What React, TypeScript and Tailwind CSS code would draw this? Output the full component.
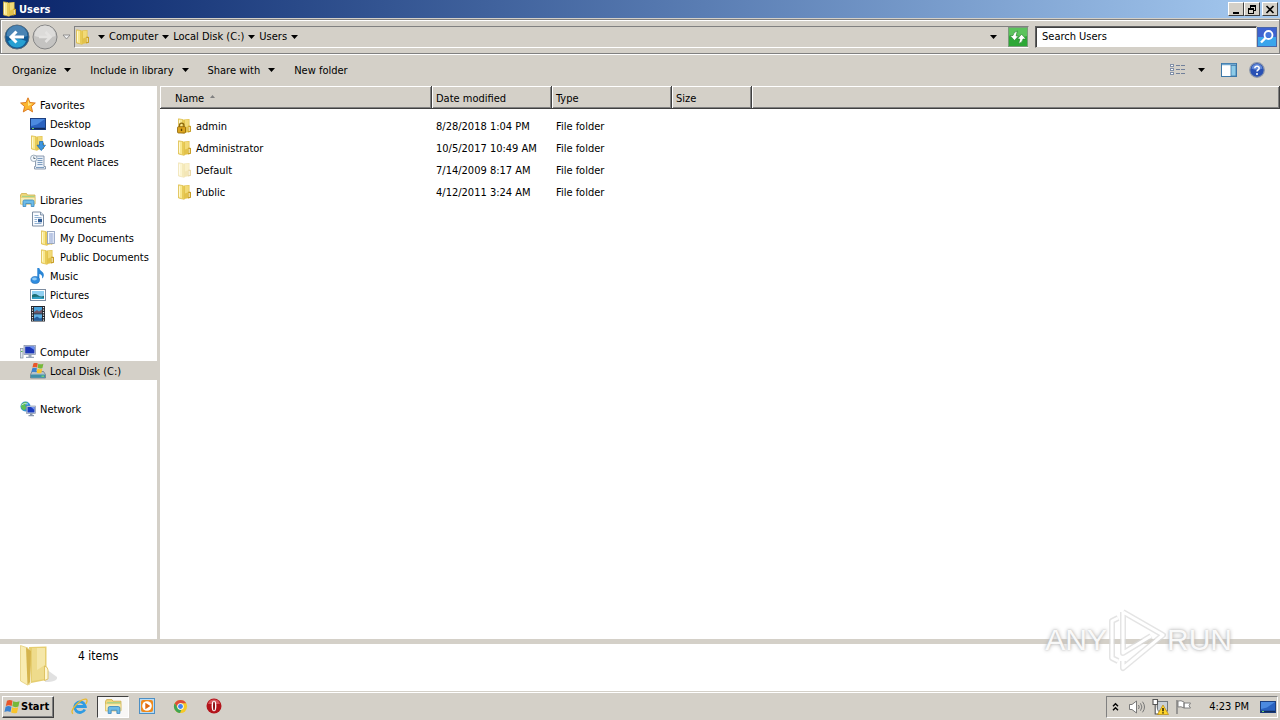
import React, { useState } from 'react';

interface FileRow {
    name: string;
    modified: string;
    type: string;
    icon: React.ReactNode;
}

interface TreeRow {
    label: string;
    level: number;
    icon: React.ReactNode;
    gap?: boolean;
}

const indents = ['pl-5', 'pl-[30px]', 'pl-10'];

const Arrow: React.FC = () => (
    <svg width="7" height="4" viewBox="0 0 7 4" className="shrink-0" aria-hidden="true">
        <path d="M0 0h7L3.500 4z" fill="#000" />
    </svg>
);

const Folder: React.FC<{ faded?: boolean; children?: React.ReactNode }> = ({ faded, children }) => (
    <svg width="16" height="16" viewBox="0 0 16 16" className="shrink-0" aria-hidden="true">
        <g opacity={faded ? 0.4 : 1}>
            <path d="M7 1.500l5.500-.5v13L7 15z" fill="#e3c24a" />
            <path d="M8 2l3.800-.3V8L8 9.500z" fill="#f2da78" />
            <path d="M1.500 .8l4.700.9 1 13.600-5.700-1.300z" fill="#f9e88f" stroke="#d9b43c" strokeWidth=".7" />
            <path d="M5 1.600l2.300.4v13.300L5 14.800z" fill="#e8cb58" />
            <path d="M2.500 2.200v10.500" stroke="#fff8d0" strokeWidth="1" />
            <path d="M11.500 7.500l2.500.5v5.800l-3 .8z" fill="#c99f27" />
            <path d="M12.200 9v4" stroke="#fff6cf" strokeWidth="1" />
        </g>
        {children}
    </svg>
);

const LockedFolder: React.FC = () => (
    <Folder>
        <path d="M2.500 9V7.300a2.200 2.200 0 0 1 4.400 0V9" fill="none" stroke="#8d6a10" strokeWidth="1.300" />
        <rect x=".5" y="8.700" width="8" height="6.300" rx="1" fill="#dca51f" stroke="#8a6207" strokeWidth=".8" />
        <path d="M4.500 10.700v2.300" stroke="#5d4207" strokeWidth="1.400" />
    </Folder>
);

const DownloadsIcon: React.FC = () => (
    <Folder>
        <path d="M9.500 6.500h3.500v3.700h2.500L11.300 15.600 7 10.200h2.500z" fill="#3d95e0" stroke="#1768b0" strokeWidth=".7" />
    </Folder>
);

const MyDocumentsIcon: React.FC = () => (
    <Folder>
        <rect x="7.500" y="1.500" width="7" height="12" fill="#f6f9ff" stroke="#8a9cc0" strokeWidth=".8" />
        <path d="M9 4h4.500M9 6h4.500M9 8h4.500M9 10h4.500M9 12h4.500" stroke="#7f95c9" strokeWidth=".9" />
        <path d="M11.200 3v9" stroke="#aebce0" strokeWidth=".6" />
    </Folder>
);

const StarIcon: React.FC = () => (
    <svg width="16" height="16" viewBox="0 0 16 16" aria-hidden="true">
        <path d="M8 .8l2 4.700 5.300.5-4 3.500 1.300 5.400L8 12.100l-4.700 2.800 1.300-5.400-4-3.500L6 5.500z" fill="#fbb62e" stroke="#d9731a" strokeWidth=".9" />
        <path d="M8 3l1.300 3.400 3.400.4L8 9z" fill="#ffe68a" />
    </svg>
);

const DesktopIcon: React.FC = () => (
    <svg width="16" height="16" viewBox="0 0 16 16" aria-hidden="true">
        <rect x=".5" y="2.500" width="15" height="11" fill="#2a62c0" stroke="#1c3f80" />
        <path d="M1 3h14L7 8.500 1 10z" fill="#4c8ae0" />
        <path d="M1 12.500h14" stroke="#102a58" strokeWidth="1.500" />
        <path d="M2 12.500h2" stroke="#6fd06a" strokeWidth="1" />
    </svg>
);

const RecentIcon: React.FC = () => (
    <svg width="16" height="16" viewBox="0 0 16 16" aria-hidden="true">
        <path d="M5.500 2h8.500v10.500h1.500V15H4.500v-2.500h1z" fill="#e8eff7" stroke="#73879e" strokeWidth=".8" />
        <path d="M7.500 4.500h5M7.500 6.500h5M7.500 8.500h5M7.500 10.500h5M6 13.500h8" stroke="#6f92b8" strokeWidth=".9" />
        <circle cx="3.800" cy="4.300" r="3.200" fill="#f5fafe" stroke="#8899aa" strokeWidth=".8" />
        <path d="M3.800 2.500v2h1.700" fill="none" stroke="#456" strokeWidth=".8" />
    </svg>
);

const LibrariesIcon: React.FC<{ size?: number }> = ({ size = 16 }) => (
    <svg width={size} height={size} viewBox="0 0 16 16" aria-hidden="true">
        <path d="M.5 3l1-1.500h5L7.500 3H15v9H.5z" fill="#f0d77b" stroke="#cfae4a" strokeWidth=".8" />
        <path d="M2 3.800h12.500v1.500H2z" fill="#a6d28a" />
        <path d="M.6 5.500h14.300V12H.6z" fill="#faeeb4" stroke="#dfc46a" strokeWidth=".5" />
        <path d="M3 14.500V9.500Q3 8 4.500 8h8Q14 8 14 9.500v5h-2.800v-3H5.800v3z" fill="#6cbbe8" stroke="#3b86bd" strokeWidth=".8" />
    </svg>
);

const DocumentIcon: React.FC = () => (
    <svg width="16" height="16" viewBox="0 0 16 16" aria-hidden="true">
        <path d="M2.500 1h8l3 3v11h-11z" fill="#fafcff" stroke="#6f8299" strokeWidth=".9" />
        <path d="M10.500 1v3h3" fill="#d5e1ee" stroke="#6f8299" strokeWidth=".8" />
        <path d="M4.500 4.500h4M4.500 6.500h7M4.500 8.500h2.500M4.500 10.500h2.500M4.500 12.500h7" stroke="#85a8cd" strokeWidth=".9" />
        <rect x="8" y="7.800" width="4" height="3.500" fill="#2d5a94" />
    </svg>
);

const MusicIcon: React.FC = () => (
    <svg width="16" height="16" viewBox="0 0 16 16" aria-hidden="true">
        <path d="M7.300 0h2c.3 3 5 3.500 4.500 7.500-.2 1.600-.9 2.500-1.800 3 .7-2.700-.5-3.800-2.700-4.400V12h-2z" fill="#2b86d6" />
        <ellipse cx="5.200" cy="12" rx="4.300" ry="3.500" fill="#2f8de0" stroke="#1968b5" strokeWidth=".6" />
        <ellipse cx="4.500" cy="11" rx="2.400" ry="1.400" fill="#8fcaf5" />
    </svg>
);

const PicturesIcon: React.FC = () => (
    <svg width="16" height="16" viewBox="0 0 16 16" aria-hidden="true">
        <rect x=".5" y="2.500" width="15" height="11" fill="#fff" stroke="#7c8ca0" />
        <rect x="2" y="4" width="12" height="8" fill="#8fd0f2" />
        <path d="M2 8q3-2 6 .3t6 .5V12H2z" fill="#1d6f74" />
        <path d="M2 10.500q5-1.500 12 .5v1H2z" fill="#2f9fc4" />
    </svg>
);

const VideosIcon: React.FC = () => (
    <svg width="16" height="16" viewBox="0 0 16 16" aria-hidden="true">
        <rect x="1" y="0" width="14" height="15.500" fill="#22252c" />
        <rect x="4" y="1" width="8" height="6.300" fill="#4aa3dc" />
        <rect x="4" y="8.300" width="8" height="6.300" fill="#5fb0e4" />
        <path d="M4 6l3-2 2 1.500 3-2v3.800H4z" fill="#6f5668" />
        <path d="M4 12.500l3-2 3 2 2-1v3.100H4z" fill="#265d9c" />
        <path d="M2.500 1v14M13.500 1v14" stroke="#e8ecf0" strokeWidth="1.200" strokeDasharray="1.300 1.200" />
    </svg>
);

const ComputerIcon: React.FC = () => (
    <svg width="16" height="16" viewBox="0 0 16 16" aria-hidden="true">
        <rect x=".5" y="4.500" width="2.500" height="9.500" fill="#dfe5ec" stroke="#8090a0" strokeWidth=".7" />
        <path d="M1 7.500h1.500" stroke="#56b450" />
        <rect x="4" y="1.500" width="11.500" height="9" fill="#c9d2e0" stroke="#7f8ca5" strokeWidth=".7" />
        <rect x="5.200" y="2.600" width="9.200" height="6.800" fill="#1c37b8" />
        <path d="M9 2.600h5.400v3.500z" fill="#6c8ff0" />
        <path d="M8.500 10.500h3v2.200h2.500v1.300H6v-1.300h2.500z" fill="#98a6ba" />
    </svg>
);

const WindowsFlag: React.FC = () => (
    <>
        <path d="M2.800 1.700Q5.300 .3 8 1.700L7.200 6.500Q4.500 5.200 1.700 6.500z" fill="#e8562a" />
        <path d="M8.600 2Q11.500 3.400 14.600 2L13.500 7Q10.500 8.300 7.800 6.900z" fill="#76b83a" />
        <path d="M1.500 7.300Q4.200 6 7 7.300L6.100 12.100Q3.200 10.800.4 12.100z" fill="#3b82d0" />
        <path d="M7.600 7.700Q10.400 9.100 13.300 7.800L12.200 12.800Q9.400 14 6.700 12.600z" fill="#f8c42c" />
    </>
);

const DiskIcon: React.FC = () => (
    <svg width="16" height="16" viewBox="0 0 16 16" aria-hidden="true">
        <path d="M2 8.500h11.500l2 3v3.500H.5v-3.500z" fill="#b4c2cd" stroke="#62707d" strokeWidth=".7" />
        <rect x=".8" y="11.500" width="14.400" height="3.300" fill="#3f8fa8" />
        <path d="M11.500 13.200h2.500" stroke="#7be06a" strokeWidth="1.200" />
        <g transform="translate(1 -1) scale(.85)">
            <WindowsFlag />
        </g>
    </svg>
);

const NetworkIcon: React.FC = () => (
    <svg width="16" height="16" viewBox="0 0 16 16" aria-hidden="true">
        <circle cx="5.500" cy="5.500" r="5" fill="#2f8fd8" />
        <path d="M2 2.500Q5 0 7.500 1.500L5 4.500 6.500 7 4 9.500Q.5 7.500 1 4.500z" fill="#5fbf54" />
        <path d="M1.500 4Q4 1.500 8 3" fill="none" stroke="#d5effc" strokeWidth=".8" />
        <rect x="6.500" y="5" width="9" height="7.500" fill="#cdd6e4" stroke="#7a88a0" strokeWidth=".6" />
        <rect x="7.500" y="6" width="7" height="5.500" fill="#1b3cbf" />
        <path d="M11 6h3.500v3z" fill="#7797ee" />
        <path d="M10 12.500h2.500v1.500H14v1.200H8.500V14H10z" fill="#8797ad" />
    </svg>
);

const files: FileRow[] = [
    { name: 'admin', modified: '8/28/2018 1:04 PM', type: 'File folder', icon: <LockedFolder /> },
    { name: 'Administrator', modified: '10/5/2017 10:49 AM', type: 'File folder', icon: <Folder /> },
    { name: 'Default', modified: '7/14/2009 8:17 AM', type: 'File folder', icon: <Folder faded /> },
    { name: 'Public', modified: '4/12/2011 3:24 AM', type: 'File folder', icon: <Folder /> },
];

const tree: TreeRow[] = [
    { label: 'Favorites', level: 0, icon: <StarIcon /> },
    { label: 'Desktop', level: 1, icon: <DesktopIcon /> },
    { label: 'Downloads', level: 1, icon: <DownloadsIcon /> },
    { label: 'Recent Places', level: 1, icon: <RecentIcon /> },
    { label: 'Libraries', level: 0, icon: <LibrariesIcon />, gap: true },
    { label: 'Documents', level: 1, icon: <DocumentIcon /> },
    { label: 'My Documents', level: 2, icon: <MyDocumentsIcon /> },
    { label: 'Public Documents', level: 2, icon: <Folder /> },
    { label: 'Music', level: 1, icon: <MusicIcon /> },
    { label: 'Pictures', level: 1, icon: <PicturesIcon /> },
    { label: 'Videos', level: 1, icon: <VideosIcon /> },
    { label: 'Computer', level: 0, icon: <ComputerIcon />, gap: true },
    { label: 'Local Disk (C:)', level: 1, icon: <DiskIcon /> },
    { label: 'Network', level: 0, icon: <NetworkIcon />, gap: true },
];

const TitleBar: React.FC = () => {
    const button = 'w-4 h-3.5 bg-[#d4d0c8] border border-t-white border-l-white border-r-[#404040] border-b-[#404040] flex items-center justify-center';
    return (
        <header className="h-[18px] flex items-center justify-between pl-0.5 pr-0.5 bg-linear-to-r from-[#0a246a] to-[#a6caf0]">
            <div className="flex items-center gap-px">
                <Folder />
                <h1 className="font-bold text-[11px] text-white">Users</h1>
            </div>
            <div className="flex">
                <button aria-label="Minimize" className={button}>
                    <svg width="10" height="9" viewBox="0 0 10 9"><path d="M2 7h6v2H2z" /></svg>
                </button>
                <button aria-label="Restore" className={button}>
                    <svg width="10" height="9" viewBox="0 0 10 9" fill="none" stroke="#000" shapeRendering="crispEdges">
                        <path d="M3.500 3V.5h5v5H7M3 1.500h6M1.500 3.500h5v5h-5zM1 4.500h6" />
                    </svg>
                </button>
                <button aria-label="Close" className={`${button} ml-0.5`}>
                    <svg width="10" height="9" viewBox="0 0 10 9"><path d="M1.500 1l7 7M8.500 1l-7 7" stroke="#000" strokeWidth="1.600" /></svg>
                </button>
            </div>
        </header>
    );
};

const NavBar: React.FC = () => {
    const [query, setQuery] = useState('Search Users');
    return (
        <div className="h-[35px] flex items-center pl-[3px] pr-0.5 mt-px border border-[#808080] shadow-[0_1px_0_#fff,inset_1px_1px_0_#fff]">
            <button aria-label="Back">
                <svg width="26" height="26" viewBox="0 0 26 26">
                    <circle cx="13" cy="13" r="12" fill="#125a94" stroke="#5a6c7c" />
                    <path d="M2.500 12a10.500 10.500 0 0 1 21 0q-10 4-21 0z" fill="#4a84b4" />
                    <path d="M4 17q9-4 18 0-2.500 6.500-9 6.500T4 17z" fill="#27a0d2" />
                    <path d="M20 13H8M12.500 7.500L7 13l5.500 5.500" fill="none" stroke="#fff" strokeWidth="3" />
                </svg>
            </button>
            <button aria-label="Forward" className="ml-0.5">
                <svg width="26" height="26" viewBox="0 0 26 26">
                    <circle cx="13" cy="13" r="12" fill="#c4c3c1" stroke="#858585" />
                    <path d="M2.500 12a10.500 10.500 0 0 1 21 0q-10 4-21 0z" fill="#dcdbd9" />
                    <path d="M7 13h11M13.500 8l5 5-5 5" fill="none" stroke="#e4e3e1" strokeWidth="2.500" />
                </svg>
            </button>
            <button aria-label="Recent pages" className="w-4 flex justify-center">
                <svg width="9" height="6" viewBox="0 0 9 6"><path d="M1 1h7L4.500 5z" fill="#eee" stroke="#808080" strokeWidth=".8" /></svg>
            </button>
            <nav className="flex-1 h-[22px] flex items-center border border-t-[#808080] border-l-[#808080] border-r-[#d4d0c8] border-b-white">
                <Folder />
                <button aria-label="Show roots" className="ml-[7px]"><Arrow /></button>
                <a href="#computer" className="ml-1">Computer</a>
                <button aria-label="Computer folders" className="w-[15px] flex justify-center"><Arrow /></button>
                <a href="#disk">Local Disk (C:)</a>
                <button aria-label="Local Disk folders" className="w-[15px] flex justify-center"><Arrow /></button>
                <a href="#users">Users</a>
                <button aria-label="Users folders" className="w-[15px] flex justify-center"><Arrow /></button>
                <button aria-label="Previous locations" className="ml-auto mr-[11px]"><Arrow /></button>
                <button aria-label="Refresh" className="w-5 h-5 bg-[#2da836] border border-[#7c9a7c] flex items-center justify-center">
                    <svg width="18" height="18" viewBox="0 0 18 18">
                        <path d="M0 0h18v8Q9 11 0 8z" fill="#5cc35c" />
                        <path d="M8.500 3Q7.500 5 7.200 8h2.300l-4 4.500L1 7.500h3Q4.500 3.500 8.500 3zM9.500 15.500Q10.500 13.500 10.800 11H8.500l4-4.800L17 11h-3Q13.500 15 9.500 15.500z" fill="#fff" stroke="#1c7a24" strokeWidth=".6" />
                    </svg>
                </button>
            </nav>
            <div className="flex items-center ml-1.5">
                <input
                    type="text"
                    aria-label="Search Users"
                    value={query}
                    onChange={(e) => setQuery(e.target.value)}
                    className="w-[222px] h-[22px] pl-1.5 bg-white outline-none border border-t-[#606060] border-l-[#606060] border-r-[#d4d0c8] border-b-[#d4d0c8] shadow-[inset_1px_1px_0_#404040]"
                />
                <button aria-label="Search" className="w-5 h-5 bg-[#3a8be0] border border-[#4a66a8] flex items-center justify-center">
                    <svg width="18" height="18" viewBox="0 0 18 18">
                        <path d="M0 0h18v9H0z" fill="#3d62cf" />
                        <path d="M0 9h18v9H0z" fill="#3aa5ec" />
                        <circle cx="10.500" cy="7" r="4" fill="#4476dc" stroke="#fff" strokeWidth="1.800" />
                        <path d="M7.500 10l-4.500 4.500" stroke="#fff" strokeWidth="2.400" />
                    </svg>
                </button>
            </div>
        </div>
    );
};

const Toolbar: React.FC = () => (
    <div className="h-8 flex items-center pl-3 pr-[15px]">
        <button className="flex items-center gap-2 mr-[19px]">Organize <Arrow /></button>
        <button className="flex items-center gap-2 mr-[19px]">Include in library <Arrow /></button>
        <button className="flex items-center gap-2 mr-[19px]">Share with <Arrow /></button>
        <button>New folder</button>
        <button aria-label="Change view" className="ml-auto">
            <svg width="16" height="14" viewBox="0 0 16 14" shapeRendering="crispEdges">
                <path d="M.5 1.500h3v2h-3zM.5 5.500h3v2h-3zM.5 9.500h3v2h-3z" fill="#fff" stroke="#8290a8" />
                <path d="M6 2.500h4M11 2.500h4M6 6.500h4M11 6.500h4M6 10.500h4M11 10.500h4" stroke="#71809a" />
            </svg>
        </button>
        <button aria-label="More view options" className="ml-3"><Arrow /></button>
        <button aria-label="Preview pane" className="ml-4">
            <svg width="16" height="14" viewBox="0 0 16 14">
                <rect x=".5" y=".5" width="15" height="13" fill="#fff" stroke="#3c77a8" />
                <path d="M1 1.500h14" stroke="#6fa6cf" strokeWidth="1.500" />
                <rect x="10" y="2.500" width="5" height="10.500" fill="#8dcbe8" stroke="#3c77a8" strokeWidth=".8" />
            </svg>
        </button>
        <button aria-label="Help" className="ml-3">
            <svg width="16" height="16" viewBox="0 0 16 16">
                <circle cx="8" cy="8" r="7.300" fill="#2850b4" stroke="#8c97ab" strokeWidth="1.200" />
                <path d="M2.500 6.500a5.600 5.600 0 0 1 11 0Q8 9 2.500 6.500z" fill="#6389d8" />
                <path d="M5.800 6.300Q5.900 4.200 8 4.200t2.200 1.900Q10.200 7.300 9 8q-1 .6-1 1.600" fill="none" stroke="#fff" strokeWidth="1.500" />
                <circle cx="8" cy="11.900" r="1" fill="#fff" />
            </svg>
        </button>
    </div>
);

const Sidebar: React.FC = () => {
    const [selected, setSelected] = useState('Local Disk (C:)');
    return (
        <aside className="w-40 shrink-0 bg-white border-r-3 border-[#d4d0c8] pt-[9px]">
            <ul>
                {tree.map((t) => (
                    <li key={t.label} className={t.gap ? 'mt-[19px]' : ''}>
                        <button
                            onClick={() => setSelected(t.label)}
                            className={`w-full h-[19px] flex items-center gap-1 text-left whitespace-nowrap ${indents[t.level]} ${selected === t.label ? 'bg-[#d4d0c8]' : ''}`}
                        >
                            {t.icon}
                            <span className="pt-px">{t.label}</span>
                        </button>
                    </li>
                ))}
            </ul>
        </aside>
    );
};

const FileList: React.FC = () => {
    const head = 'h-[23px] p-0 pt-px pl-1 text-left font-normal bg-[#d4d0c8] shadow-[inset_-1px_-1px_0_#404040,inset_1px_1px_0_#fff,inset_-2px_-2px_0_#808080]';
    return (
        <main className="flex-1 bg-white">
            <table className="w-full table-fixed border-separate border-spacing-0">
                <thead>
                    <tr>
                        <th className={`${head} w-[272px]`}>
                            <span className="flex items-center gap-1.5 pl-[11px]">
                                Name
                                <svg width="5" height="3" viewBox="0 0 5 3" className="mb-1"><path d="M0 3h5L2.500 0z" fill="#808080" /></svg>
                            </span>
                        </th>
                        <th className={`${head} w-30`}>Date modified</th>
                        <th className={`${head} w-30`}>Type</th>
                        <th className={`${head} w-20`}>Size</th>
                        <th className={head} aria-label="Empty"></th>
                    </tr>
                </thead>
                <tbody className="before:block before:h-1.5">
                    {files.map((f) => (
                        <tr key={f.name} className="h-[22px]">
                            <td className="p-0 pl-[17px]">
                                <span className="flex items-center gap-[3px]">
                                    {f.icon}
                                    <span className="pt-px">{f.name}</span>
                                </span>
                            </td>
                            <td className="p-0 pt-px pl-1 whitespace-nowrap">{f.modified}</td>
                            <td className="p-0 pt-px pl-1">{f.type}</td>
                            <td></td>
                            <td></td>
                        </tr>
                    ))}
                </tbody>
            </table>
        </main>
    );
};

const DetailsPane: React.FC = () => (
    <section className="h-[52px] shrink-0 flex items-start bg-white border-t-5 border-[#d4d0c8] pl-[19px]">
        <svg width="40" height="44" viewBox="0 0 40 44" aria-hidden="true">
            <path d="M27 25l11 8q1 5-12 5z" fill="#d4d4d4" opacity=".7" />
            <path d="M10 3l17.500-.5V36L12 39z" fill="#e6ce70" />
            <path d="M13 4h13v31l-13 2z" fill="#eedb8c" />
            <path d="M18 4h8v17l-8 5z" fill="#f5e7a9" />
            <path d="M1.500 1.500L9 4l2 36-2.500 1-7-4z" fill="#f9ecb2" stroke="#e5cf7c" strokeWidth=".8" />
            <path d="M7 3.500l5 3.500-1 31-2.500 3z" fill="#d5b44e" />
            <path d="M25.500 22q3.500 1 3.500 4v9l-3.500 1.500z" fill="#fff7d3" stroke="#d8b950" strokeWidth=".8" />
        </svg>
        <p className="ml-[19px] mt-1 text-[12px]">4 items</p>
    </section>
);

const Taskbar: React.FC = () => (
    <footer className="h-[29px] shrink-0 flex items-center pl-0.5 pr-0.5 border-t border-[#d4d0c8] shadow-[inset_0_1px_0_#fff]">
        <button className="h-[22px] w-[52px] mt-px flex items-center gap-px pl-px font-bold text-[11px] border border-t-white border-l-white border-r-[#404040] border-b-[#404040] shadow-[inset_-1px_-1px_0_#808080]">
            <svg width="16" height="16" viewBox="0 0 15 15" className="shrink-0"><WindowsFlag /></svg>
            Start
        </button>
        <button aria-label="Internet Explorer" className="ml-[17px]">
            <svg width="17" height="17" viewBox="0 0 17 17">
                <path d="M13.800 11.500a5.300 5.300 0 1 1 .5-3H4.500" fill="none" stroke="#2f9be2" strokeWidth="2.800" />
                <path d="M2 15.800Q-1 13.500 5 7T15 1.200Q17.200 2.200 14.800 6" fill="none" stroke="#e9b92f" strokeWidth="1.300" />
            </svg>
        </button>
        <button aria-label="Windows Explorer" className="ml-[9px] mt-px w-8 h-[22px] bg-[#f8f7f5] flex items-center justify-center border border-t-[#404040] border-l-[#404040] border-r-white border-b-white">
            <LibrariesIcon size={17} />
        </button>
        <button aria-label="Media Player" className="ml-2.5">
            <svg width="16" height="16" viewBox="0 0 16 16">
                <rect x=".5" y=".5" width="15" height="15" fill="#b9dcf5" stroke="#4d8fc4" />
                <rect x="2" y="2" width="12" height="12" rx="2" fill="#f08a1c" />
                <circle cx="8" cy="8" r="4.800" fill="#fff" />
                <path d="M6.300 4.800v6.400L11.300 8z" fill="#e0690f" />
            </svg>
        </button>
        <button aria-label="Chrome" className="ml-[18px]">
            <svg width="15" height="15" viewBox="0 0 16 16">
                <circle cx="8" cy="8" r="7" fill="#f6c927" />
                <path d="M1.900 4.500a7 7 0 0 1 12.200 0H8a3.500 3.500 0 0 0-3.200 5z" fill="#dd4b39" />
                <path d="M1.900 4.500l3 5.200A3.500 3.500 0 0 0 9 11.400L7.500 15A7 7 0 0 1 1.900 4.500z" fill="#3fa455" />
                <circle cx="8" cy="8" r="3.400" fill="#fff" />
                <circle cx="8" cy="8" r="2.600" fill="#4484ef" />
            </svg>
        </button>
        <button aria-label="Opera" className="ml-[18px]">
            <svg width="16" height="16" viewBox="0 0 16 16">
                <circle cx="8" cy="8" r="7.500" fill="#b3141b" />
                <path d="M2 6a6.300 6.300 0 0 1 12 0z" fill="#d9545a" />
                <ellipse cx="8" cy="8" rx="2.400" ry="5.300" fill="#fff" />
                <ellipse cx="8" cy="8" rx="1" ry="4.500" fill="#8c0d13" />
            </svg>
        </button>
        <div className="ml-auto mt-px h-[22px] w-[172px] flex items-center pl-1 border border-t-[#808080] border-l-[#808080] border-r-white border-b-white">
            <button aria-label="Show hidden icons">
                <svg width="9" height="10" viewBox="0 0 9 10" fill="none" stroke="#000" strokeWidth="1.400">
                    <path d="M2 4.200l2.500-2.500L7 4.200M2 8.200l2.500-2.500L7 8.200" />
                </svg>
            </button>
            <button aria-label="Volume" className="ml-2">
                <svg width="18" height="16" viewBox="0 0 18 16">
                    <path d="M1.500 5.500H4L8.500 2v12L4 10.500H1.500z" fill="#fff" stroke="#6c6c6c" strokeWidth=".9" />
                    <path d="M10.500 6q1.500 2 0 4M12.500 4.300q2.800 3.700 0 7.400M14.500 2.700q4 5.300 0 10.600" fill="none" stroke="#777" />
                </svg>
            </button>
            <button aria-label="Network" className="ml-1.5">
                <svg width="17" height="16" viewBox="0 0 17 16">
                    <rect x="5.500" y="2.500" width="10" height="9.500" fill="#c9d0d6" stroke="#70787f" />
                    <path d="M1 .5v5h4.500v-5zM3.200 5.500V15H7" fill="#fff" stroke="#555" strokeWidth="1.100" />
                    <path d="M11 6l5.500 9.500h-11z" fill="#ffd52a" stroke="#b8860b" strokeWidth=".7" />
                    <path d="M11 9v3.200M11 13.200v1.300" stroke="#000" strokeWidth="1.300" />
                </svg>
            </button>
            <button aria-label="Action Center" className="ml-1.5">
                <svg width="17" height="16" viewBox="0 0 17 16">
                    <path d="M3 2q3-1 6 1v6Q6 7 3 8zM9 4h6.500L14 6.700 15.500 9H9z" fill="#fff" stroke="#777" strokeWidth=".9" />
                    <path d="M2 1v14" stroke="#777" strokeWidth="1.300" />
                </svg>
            </button>
            <time className="ml-auto mr-[11px]">4:23 PM</time>
            <button aria-label="Show desktop" className="mr-px"><DesktopIcon /></button>
        </div>
    </footer>
);

const Watermark: React.FC = () => (
    <div className="absolute right-12 bottom-12 h-16 flex items-center pointer-events-none text-white/90 text-[30px] leading-10 font-['Liberation_Sans',sans-serif] [text-shadow:0_0_4px_#b0b0b0,0_0_2px_#c8c8c8]">
        <span>ANY</span>
        <svg width="60" height="64" viewBox="-1 0 60 64" fill="none" strokeLinejoin="round">
            <path d="M10 10L4 13v37l6 3M15 4v41l28-17M15 4l40 23-40 33v-7" stroke="#d9d9d9" strokeWidth="6" opacity=".7" />
            <path d="M10 10L4 13v37l6 3M15 4v41l28-17M15 4l40 23-40 33v-7" stroke="#fff" strokeWidth="3" />
        </svg>
        <span>RUN</span>
    </div>
);

const App: React.FC = () => {
    return (
        <div className="relative h-screen flex flex-col overflow-hidden bg-[#d4d0c8] text-black text-[11px] leading-[17px] font-[Tahoma,'DejaVu_Sans_Condensed',sans-serif]">
            <TitleBar />
            <NavBar />
            <Toolbar />
            <div className="flex-1 flex min-h-0">
                <Sidebar />
                <FileList />
            </div>
            <DetailsPane />
            <Taskbar />
            <Watermark />
        </div>
    );
};

export default App;
